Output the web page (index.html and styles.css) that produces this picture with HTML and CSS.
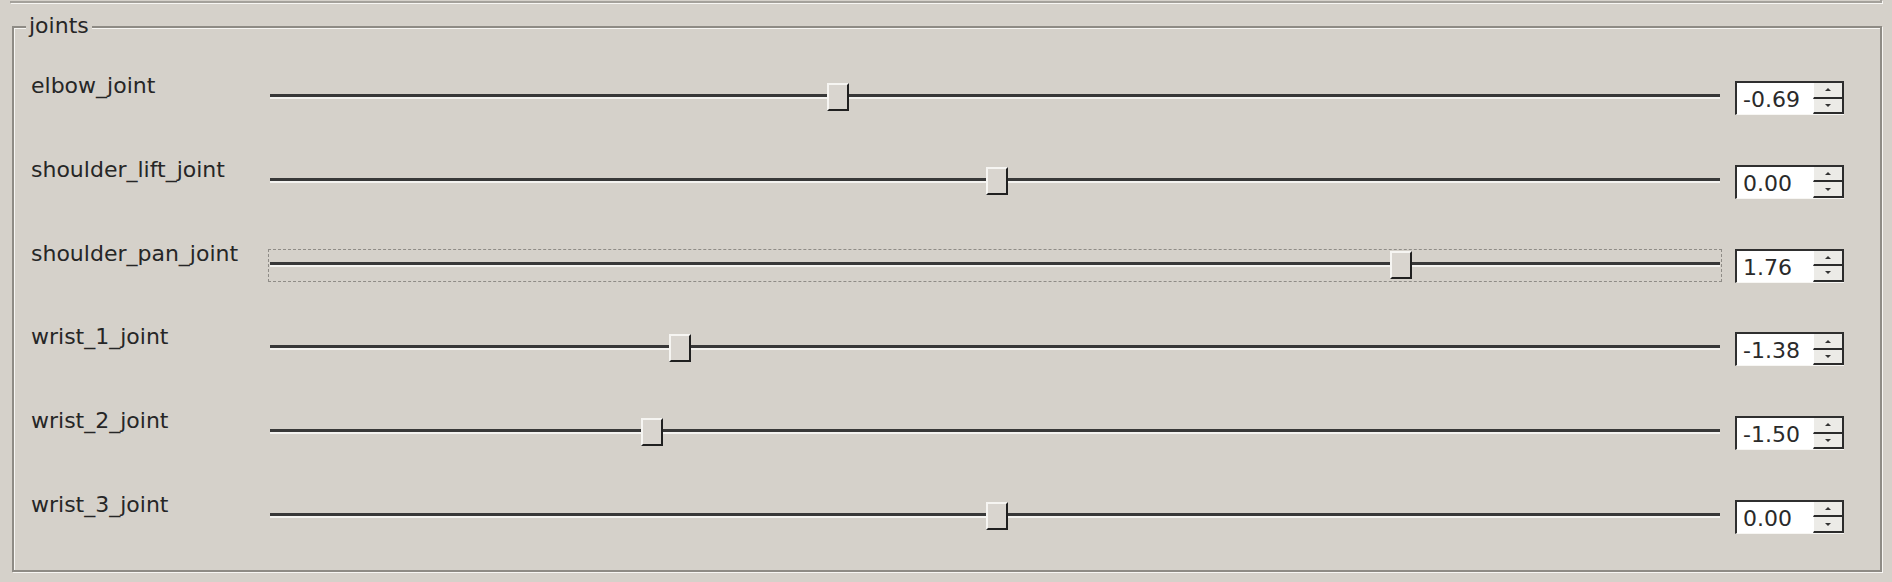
FILE: index.html
```html
<!DOCTYPE html>
<html>
<head>
<meta charset="utf-8">
<link rel="stylesheet" href="styles.css">
</head>
<body>
<div class="prev-box"></div>
<div class="groupbox">
  <span class="group-title">joints</span>
  <div class="rows">
    <div class="row">
      <div class="label">elbow_joint</div>
      <div class="slider"><div class="groove"></div><div class="handle" style="left: 557px"></div></div>
      <div class="spin"><div class="spin-text">-0.69</div><div class="spin-btns"><div class="spin-btn"><span class="arrow-up"></span></div><div class="spin-btn"><span class="arrow-down"></span></div></div></div>
    </div>
    <div class="row">
      <div class="label">shoulder_lift_joint</div>
      <div class="slider"><div class="groove"></div><div class="handle" style="left: 716px"></div></div>
      <div class="spin"><div class="spin-text">0.00</div><div class="spin-btns"><div class="spin-btn"><span class="arrow-up"></span></div><div class="spin-btn"><span class="arrow-down"></span></div></div></div>
    </div>
    <div class="row">
      <div class="label">shoulder_pan_joint</div>
      <div class="slider focused"><div class="groove"></div><div class="handle" style="left: 1120px"></div></div>
      <div class="spin"><div class="spin-text">1.76</div><div class="spin-btns"><div class="spin-btn"><span class="arrow-up"></span></div><div class="spin-btn"><span class="arrow-down"></span></div></div></div>
    </div>
    <div class="row">
      <div class="label">wrist_1_joint</div>
      <div class="slider"><div class="groove"></div><div class="handle" style="left: 399px"></div></div>
      <div class="spin"><div class="spin-text">-1.38</div><div class="spin-btns"><div class="spin-btn"><span class="arrow-up"></span></div><div class="spin-btn"><span class="arrow-down"></span></div></div></div>
    </div>
    <div class="row">
      <div class="label">wrist_2_joint</div>
      <div class="slider"><div class="groove"></div><div class="handle" style="left: 371px"></div></div>
      <div class="spin"><div class="spin-text">-1.50</div><div class="spin-btns"><div class="spin-btn"><span class="arrow-up"></span></div><div class="spin-btn"><span class="arrow-down"></span></div></div></div>
    </div>
    <div class="row">
      <div class="label">wrist_3_joint</div>
      <div class="slider"><div class="groove"></div><div class="handle" style="left: 716px"></div></div>
      <div class="spin"><div class="spin-text">0.00</div><div class="spin-btns"><div class="spin-btn"><span class="arrow-up"></span></div><div class="spin-btn"><span class="arrow-down"></span></div></div></div>
    </div>
  </div>
</div>
</body>
</html>
```

FILE: styles.css
```css
html, body {
  margin: 0;
  padding: 0;
  background: #d5d1ca;
}
body {
  width: 1892px;
  height: 582px;
  overflow: hidden;
  font-family: "DejaVu Sans", "Liberation Sans", sans-serif;
  font-size: 22px;
  color: #262626;
}
.prev-box {
  margin-left: 10px;
  width: 1870px;
  height: 1px;
  border-bottom: 2px solid #a4a19b;
  border-right: 2px solid #a4a19b;
  box-shadow: 1px 1px 0 #f7f6f3;
}
.groupbox {
  position: relative;
  margin-top: 23px;
  margin-left: 12px;
  width: 1870px;
  height: 546px;
  box-sizing: border-box;
  border: 2px solid #8e8b85;
  box-shadow: inset 1px 1px 0 #f7f6f3, 1px 1px 0 #f7f6f3;
  padding: 45px 36px 0 17px;
}
.group-title {
  position: absolute;
  left: 12px;
  top: -15px;
  padding: 0 3px;
  line-height: 26px;
  background: #d5d1ca;
}
.rows {
  display: flex;
  flex-direction: column;
  gap: 41.8px;
}
.row {
  display: grid;
  grid-template-columns: 239px 1fr 124px;
  height: 42px;
  align-items: start;
}
.label {
  line-height: 26px;
  white-space: nowrap;
}
.slider {
  position: relative;
  margin-top: 10px;
  height: 29px;
}
.slider.focused {
  outline: 1px dashed #8f8c87;
  outline-offset: 1px;
}
.groove {
  margin-top: 11px;
  height: 3px;
  background: #383838;
  border-bottom: 2px solid #f4f3f0;
}
.handle {
  position: absolute;
  top: 0;
  width: 22px;
  height: 28px;
  box-sizing: border-box;
  background: #d9d5cf;
  border-top: 2px solid #f6f5f2;
  border-left: 2px solid #f6f5f2;
  border-right: 2px solid #202020;
  border-bottom: 2px solid #202020;
}
.spin {
  margin-top: 8px;
  justify-self: end;
  width: 109px;
  height: 34px;
  box-sizing: border-box;
  display: flex;
  background: #fff;
  border-top: 2px solid #2f2f2f;
  border-left: 2px solid #2f2f2f;
  border-bottom: 1px solid #f7f6f3;
}
.spin-text {
  flex: 1;
  padding-left: 6px;
  line-height: 33px;
  color: #2a2a2a;
}
.spin-btns {
  width: 31px;
  display: flex;
  flex-direction: column;
}
.spin-btn {
  flex: 1;
  box-sizing: border-box;
  background: #ecebe7;
  border-left: 1px solid #fff;
  border-right: 2px solid #2b2b2b;
  border-bottom: 2px solid #2b2b2b;
  display: flex;
  align-items: center;
  justify-content: center;
}
.arrow-up {
  width: 0;
  height: 0;
  border-left: 3px solid transparent;
  border-right: 3px solid transparent;
  border-bottom: 3px solid #333;
}
.arrow-down {
  width: 0;
  height: 0;
  border-left: 3px solid transparent;
  border-right: 3px solid transparent;
  border-top: 3px solid #333;
}
```
